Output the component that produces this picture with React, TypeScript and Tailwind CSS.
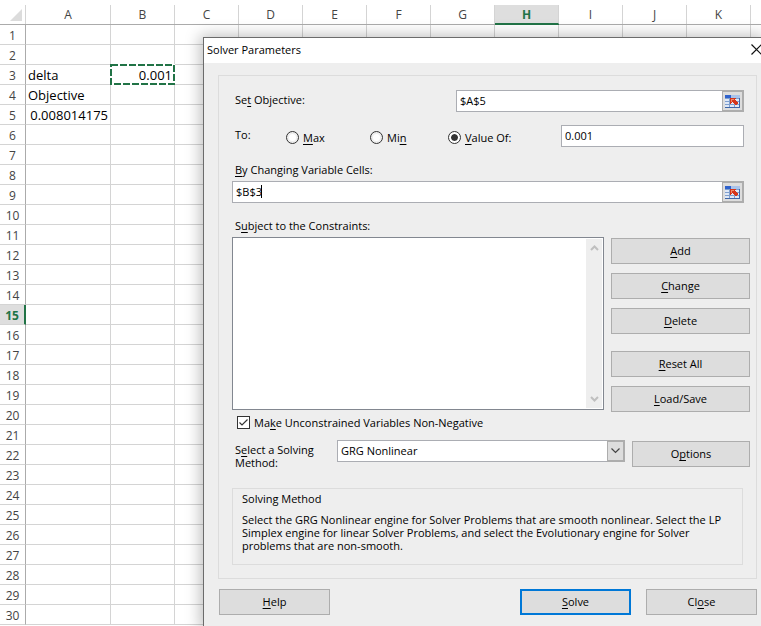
import type { ReactNode } from "react";

const columns = ["A", "B", "C", "D", "E", "F", "G", "H", "I", "J", "K"];
const rows = Array.from({ length: 30 }, (_, i) => i + 1);

const cells: Record<string, string> = {
  A3: "delta",
  B3: "0.001",
  A4: "Objective",
  A5: "0.008014175",
};

const fieldClass =
  "h-[22px] min-w-0 flex-1 border border-[#abadb3] bg-white px-[3px] pb-[2px] text-[11px] leading-[13px] text-black outline-none";

// underlined access key inside a label
function Key({ children }: { children: ReactNode }) {
  return <span className="underline decoration-1 underline-offset-2 [text-decoration-skip-ink:none]">{children}</span>;
}

function DialogButton({ children, className = "w-full" }: { children: ReactNode; className?: string }) {
  return (
    <button type="button" className={`h-[26px] shrink-0 border border-[#adadad] bg-[#dddddd] pb-[2px] ${className}`}>
      {children}
    </button>
  );
}

function RangeButton({ label }: { label: string }) {
  return (
    <button
      type="button"
      aria-label={label}
      className="grid h-[22px] w-[22px] shrink-0 place-items-center border-2 border-l border-[#adadad] bg-[#dddddd]"
    >
      <svg width="15" height="13" viewBox="0 0 15 13" shapeRendering="crispEdges" aria-hidden>
        <rect width="15" height="13" fill="#7f9fce" />
        <rect width="6" height="3" fill="#2f62cc" />
        <rect x="6" width="9" height="3" fill="#a9c3ea" />
        <path d="M0 4h4v2H0zM0 7h4v2H0zM0 10h4v2H0zM5 4h4v2H5zM5 7h4v2H5zM5 10h4v2H5zM10 4h4v2h-4zM10 7h4v2h-4zM10 10h4v2h-4z" fill="#dfe8f6" />
        <path d="M0 12h15v1H0zM14 3h1v10h-1z" fill="#3f66a8" />
        <path d="M5 3h6v1h-1v1h1v1h1v1h1v2h-1v1h-2V9H9V8H8V7H7v1H6v1H5z" fill="#d6351a" />
        <path d="M6 4h3v1H7v2H6z" fill="#f08a6a" />
      </svg>
    </button>
  );
}

function RadioOption({ checked, children, className }: { checked?: boolean; children: ReactNode; className: string }) {
  return (
    <label className={`flex shrink-0 items-center gap-1 pt-[3px] ${className}`}>
      <input
        type="radio"
        name="target"
        defaultChecked={checked}
        className="h-[13px] w-[13px] shrink-0 appearance-none rounded-full border border-[#333333] bg-white bg-clip-content p-[2px] checked:bg-[#333333] checked:shadow-[inset_0_0_0_2px_#ffffff]"
      />
      <span>{children}</span>
    </label>
  );
}

function Sheet() {
  return (
    <table className="w-full table-fixed border-separate border-spacing-0 text-[13px] leading-[17px] text-black">
      <colgroup>
        <col className="w-[26px]" />
        <col className="w-[85px]" />
        {columns.slice(1).map((column) => (
          <col key={column} className="w-16" />
        ))}
        <col />
      </colgroup>
      <thead>
        <tr className="text-[12px] leading-[19px] text-[#444444]">
          <td className="border-b border-[#ababab] p-0 pt-[5px]">
            <div className="flex h-[19px] justify-end border-r border-[#d4d4d4] pt-1 pr-[3px]">
              <svg width="12" height="12" aria-hidden>
                <path d="M12 0v12H0z" fill="#dcdcdc" />
              </svg>
            </div>
          </td>
          {columns.map((column) => (
            <th
              key={column}
              scope="col"
              className={`border-b p-0 pt-[5px] ${column === "H" ? "border-[#217346] font-bold text-[#217346]" : "border-[#ababab] font-normal"}`}
            >
              <div
                className={`h-[19px] border-r border-r-[#d4d4d4] ${column === "H" ? "border-b border-b-[#217346] bg-[#dedede]" : ""}`}
              >
                {column}
              </div>
            </th>
          ))}
          <td className="border-b border-[#ababab] p-0" />
        </tr>
      </thead>
      <tbody>
        {rows.map((row) => (
          <tr key={row} className="h-5">
            <th
              scope="row"
              className={`h-5 border-b border-b-[#d4d4d4] p-0 pt-[2px] text-center text-[12px] ${row === 15 ? "border-r-2 border-r-[#217346] bg-[#dedede] font-bold text-[#217346]" : "border-r border-r-[#ababab] font-normal text-[#444444]"}`}
            >
              {row}
            </th>
            {columns.map((column) => {
              const value = cells[column + row];
              const numeric = value !== undefined && !isNaN(Number(value));
              return (
                <td
                  key={column}
                  className={`relative h-5 border-r border-b border-[#d4d4d4] px-[2px] pt-[2px] pb-0 ${numeric ? "text-right" : ""}`}
                >
                  {value}
                  {column + row === "B3" && (
                    <svg className="absolute -top-px -left-px h-[21px] w-[65px]" viewBox="0 0 65 21" aria-hidden>
                      <rect x="1" y="1" width="63" height="19" fill="none" stroke="#ffffff" strokeWidth="2" />
                      <rect x="1" y="1" width="63" height="19" fill="none" stroke="#217346" strokeWidth="2" strokeDasharray="7 2" />
                    </svg>
                  )}
                </td>
              );
            })}
            <td className="h-5 border-b border-[#d4d4d4] p-0" />
          </tr>
        ))}
      </tbody>
    </table>
  );
}

function SolverDialog() {
  return (
    <section
      role="dialog"
      aria-labelledby="solver-title"
      className="absolute top-[37px] right-0 bottom-0 left-[203px] flex flex-col border-t border-l border-[#6b6b6b] bg-[#eeeeee] text-[11px] leading-[13px] text-black shadow-[0_1px_14px_3px_rgba(0,0,0,0.25)]"
    >
      <header className="flex h-[25px] shrink-0 items-center justify-between overflow-hidden bg-white pb-[2px] pl-[3px]">
        <h1 id="solver-title">Solver Parameters</h1>
        <button type="button" aria-label="Close window" className="-mr-px">
          <svg width="11" height="11" viewBox="0 0 11 11" fill="none" stroke="#111111" aria-hidden>
            <path d="M.5 .5l10 10M10.5 .5l-10 10" strokeWidth="1.200" />
          </svg>
        </button>
      </header>

      <form className="pt-3 pr-1 pl-[14px]" onSubmit={(e) => e.preventDefault()}>
        <div className="border border-[#dcdcdc] pt-[14px] pr-[6px] pb-[13px] pl-[13px]">
          <div className="mr-[6px] flex">
            <label htmlFor="objective" className="w-[224px] shrink-0 pt-[3px] pl-[3px]">
              Se<Key>t</Key> Objective:
            </label>
            <input id="objective" defaultValue="$A$5" className={`${fieldClass} border-r-0`} />
            <RangeButton label="Pick objective cell" />
          </div>

          <fieldset className="mt-[13px] mr-[6px] flex">
            <span className="w-[54px] shrink-0 pt-[3px] pl-[3px]">To:</span>
            <RadioOption className="w-[84px]">
              <Key>M</Key>ax
            </RadioOption>
            <RadioOption className="w-[78px]">
              Mi<Key>n</Key>
            </RadioOption>
            <RadioOption className="w-[113px]" checked>
              <Key>V</Key>alue Of:
            </RadioOption>
            <input aria-label="Target value" defaultValue="0.001" className={fieldClass} />
          </fieldset>

          <label htmlFor="variables" className="mt-4 block pl-[3px]">
            <Key>B</Key>y Changing Variable Cells:
          </label>
          <div className="relative mt-[5px] mr-[6px] flex">
            <input id="variables" defaultValue="$B$3" className={`${fieldClass} border-r-0 caret-transparent`} />
            <span className="pointer-events-none absolute top-1 left-[29px] h-[13px] w-px bg-black" aria-hidden />
            <RangeButton label="Pick variable cells" />
          </div>

          <label htmlFor="constraints" className="mt-4 block pl-[3px]">
            S<Key>u</Key>bject to the Constraints:
          </label>
          <div className="mt-[5px] flex gap-[7px]">
            <div className="flex h-[173px] min-w-0 flex-1 border border-[#828790] bg-white p-px">
              <select id="constraints" size={8} className="min-w-0 flex-1 appearance-none bg-white outline-none" />
              <div className="flex w-4 shrink-0 flex-col items-center justify-between bg-[#eeeeee] py-[6px]">
                <svg width="9" height="6" fill="none" stroke="#bfbfbf" strokeWidth="2" aria-hidden>
                  <path d="M1 5l3.500-3.500L8 5" />
                </svg>
                <svg width="9" height="6" fill="none" stroke="#bfbfbf" strokeWidth="2" aria-hidden>
                  <path d="M1 1l3.500 3.500L8 1" />
                </svg>
              </div>
            </div>
            <div className="flex w-[139px] shrink-0 flex-col gap-[9px] pt-px">
              <DialogButton>
                <Key>A</Key>dd
              </DialogButton>
              <DialogButton>
                <Key>C</Key>hange
              </DialogButton>
              <DialogButton>
                <Key>D</Key>elete
              </DialogButton>
              <DialogButton className="mt-2 w-full">
                <Key>R</Key>eset All
              </DialogButton>
              <DialogButton>
                <Key>L</Key>oad/Save
              </DialogButton>
            </div>
          </div>

          <label className="mt-1 flex items-center gap-1 pl-[5px]">
            <span className="relative grid h-[13px] w-[13px] shrink-0 place-items-center">
              <input
                type="checkbox"
                defaultChecked
                className="peer h-[13px] w-[13px] appearance-none border border-[#333333] bg-white"
              />
              <svg
                className="pointer-events-none absolute inset-0 hidden peer-checked:block"
                width="13"
                height="13"
                fill="none"
                stroke="#333333"
                aria-hidden
              >
                <path d="M2.500 6.500l2.500 2.500 5.500-5.500" strokeWidth="1.200" />
              </svg>
            </span>
            <span>
              Ma<Key>k</Key>e Unconstrained Variables Non-Negative
            </span>
          </label>

          <div className="mt-[11px] flex">
            <label htmlFor="method" className="w-[105px] shrink-0 pt-[3px] pr-2 pl-[3px]">
              S<Key>e</Key>lect a Solving Method:
            </label>
            <div className="relative h-[22px] min-w-0 flex-1">
              <select
                id="method"
                className="h-[22px] w-full appearance-none border border-[#abadb3] bg-white px-[3px] pb-[2px] outline-none"
              >
                <option>GRG Nonlinear</option>
                <option>Simplex LP</option>
                <option>Evolutionary</option>
              </select>
              <span className="pointer-events-none absolute top-0 right-0 grid h-[22px] w-[18px] place-items-center border-2 border-l border-[#adadad] bg-[#dddddd]">
                <svg width="9" height="6" fill="none" stroke="#444444" strokeWidth="1.200" aria-hidden>
                  <path d="M.5 .5l4 4 4-4" />
                </svg>
              </span>
            </div>
            <DialogButton className="mt-px ml-[7px] w-[118px]">
              O<Key>p</Key>tions
            </DialogButton>
          </div>

          <section className="mt-[19px] mr-[7px] h-[77px] border border-[#dcdcdc] px-[9px] pt-[3px]">
            <h2>Solving Method</h2>
            <p className="mt-2">
              Select the GRG Nonlinear engine for Solver Problems that are smooth nonlinear. Select the LP Simplex
              engine for linear Solver Problems, and select the Evolutionary engine for Solver problems that are
              non-smooth.
            </p>
          </section>
        </div>

        <div className="mt-[10px] flex gap-[15px] pl-px">
          <DialogButton className="w-[111px]">
            <Key>H</Key>elp
          </DialogButton>
          <button
            type="submit"
            className="ml-auto h-[26px] w-[111px] shrink-0 border-2 border-[#0078d7] bg-[#dddddd] pb-[2px]"
          >
            <Key>S</Key>olve
          </button>
          <DialogButton className="w-[111px]">
            Cl<Key>o</Key>se
          </DialogButton>
        </div>
      </form>
    </section>
  );
}

export default function App() {
  return (
    <main className="relative h-screen overflow-hidden bg-white font-['Open_Sans','Noto_Sans',sans-serif]">
      <Sheet />
      <SolverDialog />
    </main>
  );
}
